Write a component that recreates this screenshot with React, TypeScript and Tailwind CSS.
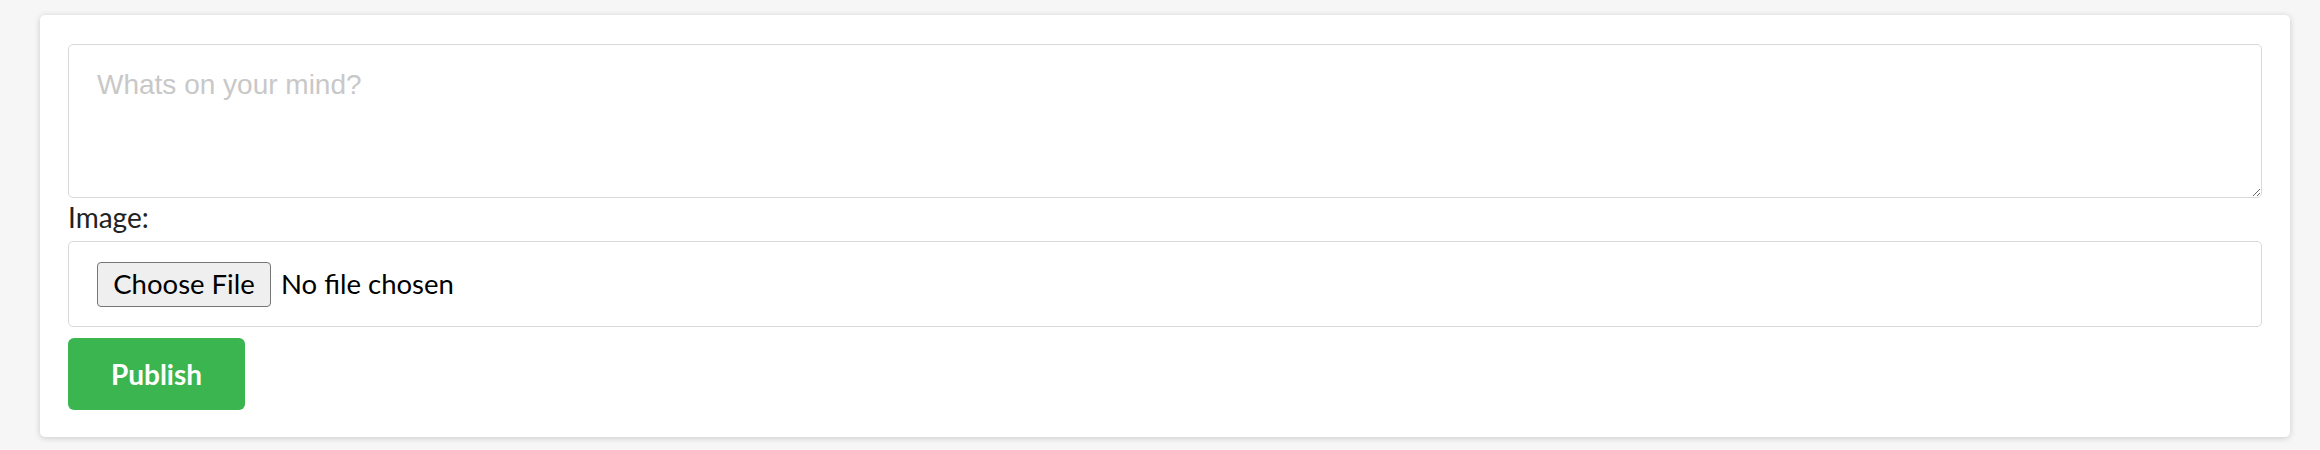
import React, { useState } from 'react';

export default function App() {
    const [text, setText] = useState('');

    return (
        <div className="min-h-[450px] w-full bg-[#f6f6f6] pt-[15px] pl-[40px] font-['Lato',sans-serif]">
            <form
                onSubmit={(e) => e.preventDefault()}
                className="flex w-[2250px] flex-col rounded-[5px] bg-white px-[28px] pt-[29px] pb-[27px] shadow-[0_1px_6px_rgba(0,0,0,0.18)]"
            >
                {/* Post text */}
                <textarea
                    value={text}
                    onChange={(e) => setText(e.target.value)}
                    placeholder="Whats on your mind?"
                    className="h-[154px] w-full rounded-[5px] border border-[#d9d9d9] bg-white px-[28px] pt-[21px] pb-[12px] font-['Liberation_Sans',Arial,sans-serif] text-[28px] leading-[38px] text-[#333] outline-none placeholder:text-[#c8c8c8]"
                />

                {/* Image upload */}
                <label className="mb-[4px] text-[28px] leading-[39px] text-[#222]">Image:</label>
                <div className="flex h-[86px] items-center rounded-[5px] border border-[#d9d9d9] px-[28px]">
                    <button
                        type="button"
                        className="flex h-[45px] w-[174px] items-center justify-center rounded-[4px] border border-[#767676] bg-[#efefef] text-[27.5px] text-black"
                    >
                        Choose File
                    </button>
                    <span className="ml-[10px] text-[27.5px] text-black">No file chosen</span>
                </div>

                {/* Submit */}
                <div className="mt-[11px]">
                    <button
                        type="submit"
                        className="flex h-[72px] w-[177px] items-center justify-center rounded-[6px] bg-[#3bb54f] text-[28px] font-bold text-white"
                    >
                        Publish
                    </button>
                </div>
            </form>
        </div>
    );
}
